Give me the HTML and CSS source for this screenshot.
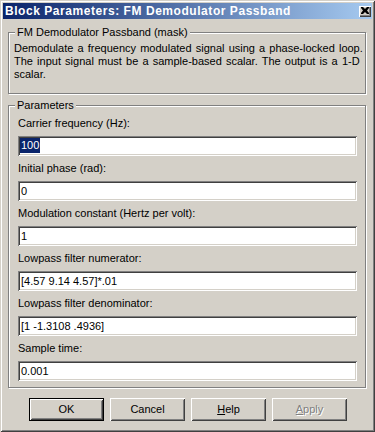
FILE: index.html
```html
<!DOCTYPE html>
<html>
<head>
<meta charset="utf-8">
<link rel="stylesheet" href="styles.css">
</head>
<body>
<div class="window">
  <div class="titlebar">
    <span class="title">Block Parameters: FM Demodulator Passband</span>
    <span class="close">
      <svg width="8" height="7" viewBox="0 0 8 7"><path d="M0 0h2l2 2 2-2h2v1L6 3.5 8 6v1H6L4 5 2 7H0V6l2-2.5L0 1z" fill="#000"/></svg>
    </span>
  </div>
  <div class="content">
    <div class="group group-desc">
      <span class="legend">FM Demodulator Passband (mask)</span>
      <p class="desc">Demodulate a frequency modulated signal using a phase-locked loop.<br>The input signal must be a sample-based scalar. The output is a 1-D<br>scalar.</p>
    </div>
    <div class="group group-params">
      <span class="legend">Parameters</span>
      <div class="field">
        <label class="label">Carrier frequency (Hz):</label>
        <div class="input"><span class="sel">100</span></div>
      </div>
      <div class="field">
        <label class="label">Initial phase (rad):</label>
        <div class="input">0</div>
      </div>
      <div class="field">
        <label class="label">Modulation constant (Hertz per volt):</label>
        <div class="input">1</div>
      </div>
      <div class="field">
        <label class="label">Lowpass filter numerator:</label>
        <div class="input">[4.57 9.14 4.57]*.01</div>
      </div>
      <div class="field">
        <label class="label">Lowpass filter denominator:</label>
        <div class="input">[1 -1.3108 .4936]</div>
      </div>
      <div class="field">
        <label class="label">Sample time:</label>
        <div class="input">0.001</div>
      </div>
    </div>
    <div class="buttons">
      <div class="btn btn-default"><span class="btn-inner">OK</span></div>
      <div class="btn"><span class="btn-inner">Cancel</span></div>
      <div class="btn"><span class="btn-inner"><u>H</u>elp</span></div>
      <div class="btn btn-disabled"><span class="btn-inner"><u>A</u>pply</span></div>
    </div>
  </div>
</div>
</body>
</html>
```

FILE: styles.css
```css
* { box-sizing: border-box; }
html, body { margin: 0; padding: 0; background: #d4d0c8; }
body {
  font-family: "Liberation Sans", Arial, sans-serif;
  font-size: 11px;
  color: #000;
}
.window {
  width: 375px;
  height: 432px;
  background: #d4d0c8;
  padding: 3px;
  box-shadow: inset 1px 1px 0 #d4d0c8, inset -1px -1px 0 #404040,
              inset 2px 2px 0 #ffffff, inset -2px -2px 0 #808080;
  display: flex;
  flex-direction: column;
}
.titlebar {
  height: 16px;
  background: linear-gradient(to right, #0a246a, #a6caf0);
  display: flex;
  align-items: center;
  justify-content: space-between;
  padding: 0 1px 0 2px;
}
.title {
  color: #fff;
  font-weight: bold;
  font-size: 12px;
  line-height: 14px;
  letter-spacing: 0.55px;
}
.close {
  width: 12px;
  height: 11px;
  background: #d4d0c8;
  box-shadow: inset 1px 1px 0 #fff, inset -1px -1px 0 #404040, inset -2px -2px 0 #808080;
  display: flex;
  align-items: center;
  justify-content: center;
  padding: 0 1px 1px 0;
}
.close svg { display: block; }
.content {
  padding: 13px 6px 0 5px;
  display: flex;
  flex-direction: column;
}
.group {
  position: relative;
  border: 1px solid #808080;
  box-shadow: inset 1px 1px 0 #fff, 1px 1px 0 #fff;
  width: 358px;
}
.legend {
  position: absolute;
  top: -7px;
  left: 6px;
  padding: 0 2px 0 2px;
  background: #d4d0c8;
  line-height: 13px;
  white-space: nowrap;
}
.group-desc {
  height: 62px;
  padding: 9px 0 0 5px;
}
.desc {
  margin: 0;
  line-height: 13px;
  word-spacing: 1.1px;
  white-space: nowrap;
}
.group-params {
  margin-top: 11px;
  height: 283px;
  padding: 11px 8px 0 9px;
  display: flex;
  flex-direction: column;
  gap: 6px;
}
.field {
  display: flex;
  flex-direction: column;
}
.label {
  line-height: 13px;
  margin-bottom: 6px;
}
.input {
  height: 20px;
  background: #fff;
  padding: 0 3px 0 3px;
  line-height: 20px;
  white-space: nowrap;
  box-shadow: inset 1px 1px 0 #808080, inset -1px -1px 0 #fff,
              inset 2px 2px 0 #404040, inset -2px -2px 0 #d4d0c8;
}
.sel {
  background: #0a246a;
  color: #fff;
  display: inline-block;
  line-height: 15px;
  padding: 0 1px;
  margin-left: -1px;
  vertical-align: 1px;
}
.buttons {
  display: flex;
  gap: 6px;
  margin-top: 10px;
  padding-left: 21px;
}
.btn {
  width: 75px;
  height: 23px;
  background: #d4d0c8;
  box-shadow: inset 1px 1px 0 #fff, inset -1px -1px 0 #404040,
              inset 2px 2px 0 #d4d0c8, inset -2px -2px 0 #808080;
  display: flex;
  align-items: center;
  justify-content: center;
}
.btn-default {
  border: 1px solid #000;
}
.btn-inner {
  line-height: 13px;
}
.btn-disabled .btn-inner {
  color: #808080;
  text-shadow: 1px 1px 0 #fff;
}
.btn-disabled u { text-decoration-color: #808080; }
```
